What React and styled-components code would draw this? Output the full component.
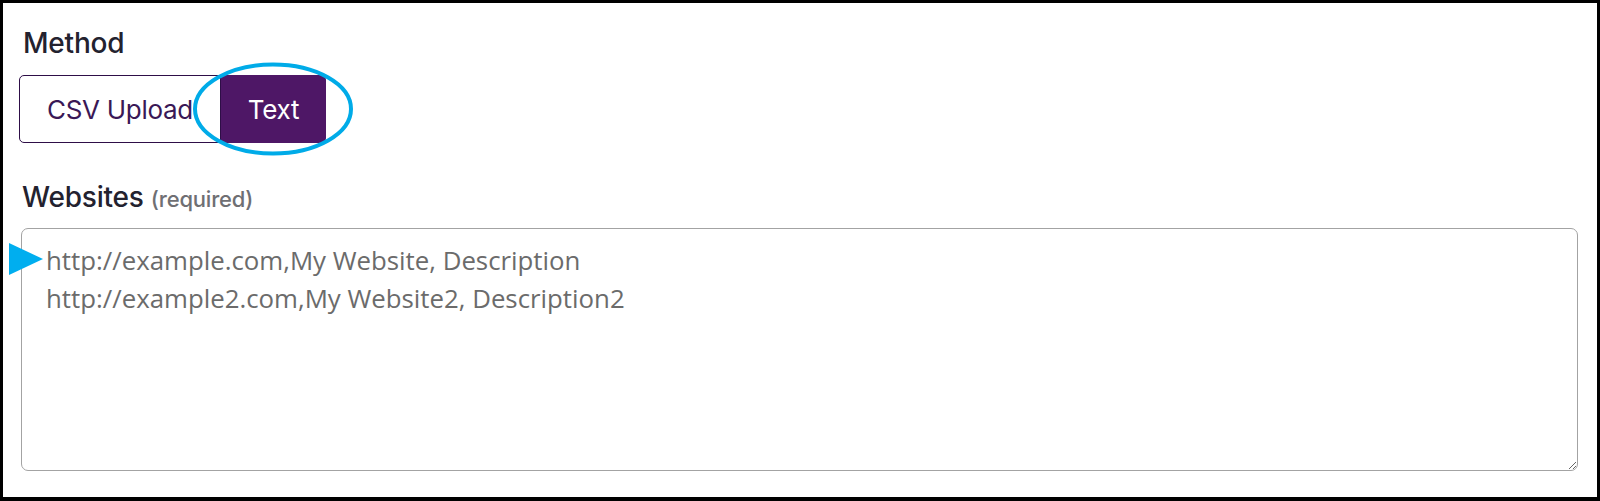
import React from "react";
import styled, { createGlobalStyle } from "styled-components";

const GlobalStyle = createGlobalStyle`
  html, body {
    margin: 0;
    padding: 0;
    background: #ffffff;
  }
`;

const Frame = styled.div`
  box-sizing: border-box;
  height: 501px;
  border: 3px solid #000;
  border-bottom-width: 4px;
  padding: 23px 19px 0 17px;
  font-family: Inter, "Noto Sans", sans-serif;
  display: flex;
  flex-direction: column;
`;

const Label = styled.div`
  font-size: 28px;
  font-weight: 500;
  line-height: 34px;
  color: #23222f;
  letter-spacing: -0.2px;
  margin-left: ${props => props.indent || 0}px;
`;

const Hint = styled.span`
  font-size: 22px;
  font-weight: 500;
  color: #6f6f73;
  margin-left: 7px;
`;

const Toggle = styled.div`
  position: relative;
  display: flex;
  align-self: flex-start;
  margin: 15px 0 37px -1px;
`;

const ToggleButton = styled.button`
  box-sizing: border-box;
  height: 68px;
  padding: 0 ${props => (props.active ? 26 : 27)}px;
  font-family: Inter, "Noto Sans", sans-serif;
  font-size: 26px;
  font-weight: 400;
  letter-spacing: -0.3px;
  cursor: pointer;
  border: 1px solid ${props => (props.active ? "#4e1766" : "#2e0e47")};
  background: ${props => (props.active ? "#4e1766" : "#ffffff")};
  color: ${props => (props.active ? "#ffffff" : "#3a1856")};
  border-radius: ${props => (props.first ? "5px 0 0 5px" : "0 5px 5px 0")};
`;

const Highlight = styled.svg`
  position: absolute;
  left: 174px;
  top: -13px;
  pointer-events: none;
`;

const FieldWrap = styled.div`
  position: relative;
  margin-top: 12px;
  margin-left: 1px;
`;

const Input = styled.textarea`
  display: block;
  box-sizing: border-box;
  width: 100%;
  height: 243px;
  padding: 12px 24px;
  border: 1px solid #a3a3a3;
  border-radius: 7px;
  font-family: "Open Sans", "Noto Sans", sans-serif;
  font-size: 25.8px;
  line-height: 38px;
  color: #6b6b6b;
  resize: vertical;
  outline: none;
`;

const Pointer = styled.svg`
  position: absolute;
  left: -12px;
  top: 15px;
`;

export default function App() {
  return (
    <>
      <GlobalStyle />
      <Frame>
        <Label indent={3}>Method</Label>
        <Toggle>
          <ToggleButton first>CSV Upload</ToggleButton>
          <ToggleButton active>Text</ToggleButton>
          <Highlight width="160" height="94" viewBox="0 0 160 94">
            <ellipse cx="80" cy="47" rx="78" ry="44.5" fill="none" stroke="#00abe8" strokeWidth="4" />
          </Highlight>
        </Toggle>
        <Label indent={2}>
          Websites<Hint>(required)</Hint>
        </Label>
        <FieldWrap>
          <Input
            defaultValue={"http://example.com,My Website, Description\nhttp://example2.com,My Website2, Description2"}
          />
          <Pointer width="34" height="32" viewBox="0 0 34 32">
            <polygon points="0,0 34,16 0,32" fill="#00aeef" />
          </Pointer>
        </FieldWrap>
      </Frame>
    </>
  );
}
